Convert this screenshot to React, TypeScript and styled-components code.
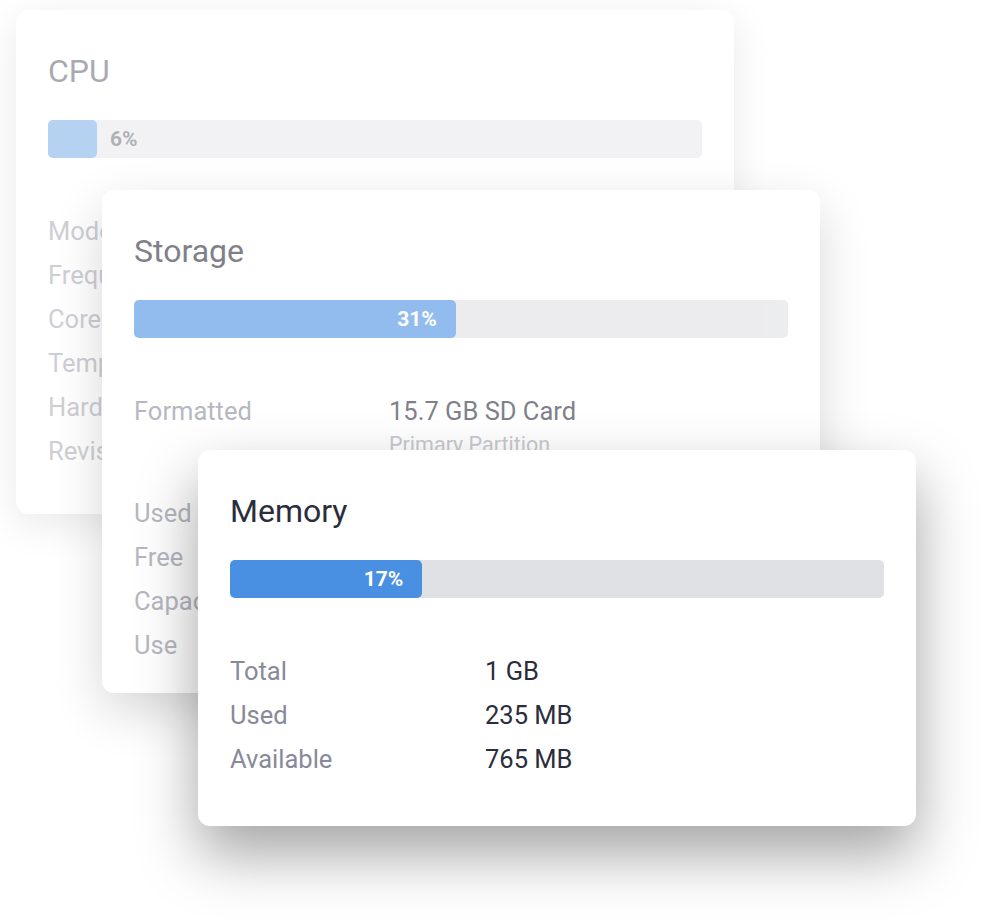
import * as React from "react";
import styled, { createGlobalStyle } from "styled-components";

const GlobalStyle = createGlobalStyle`
  html, body {
    margin: 0;
    padding: 0;
    background: #ffffff;
    font-family: Roboto, "Liberation Sans", sans-serif;
    -webkit-font-smoothing: antialiased;
  }
`;

interface IRow {
  label: string;
  value: string;
  sub?: string;
}

interface ICard {
  title: string;
  percent: number;
  fill: number; // bar fill width, in % of the track
  inside: boolean; // label sits inside the fill
  fade: number;
  left: number;
  top: number;
  height: number;
  shadow: string;
  rows: IRow[];
}

const cards: ICard[] = [
  {
    title: "CPU",
    percent: 6,
    fill: 7.5,
    inside: false,
    fade: 0.4,
    left: 16,
    top: 10,
    height: 504,
    shadow: "0 10px 40px rgba(0, 0, 0, 0.09)",
    rows: [
      { label: "Model", value: "ARMv7 Processor rev 4" },
      { label: "Frequency", value: "1.2 GHz" },
      { label: "Cores", value: "4" },
      { label: "Temperature", value: "48.3 °C" },
      { label: "Hardware", value: "BCM2835" },
      { label: "Revision", value: "a02082" }
    ]
  },
  {
    title: "Storage",
    percent: 31,
    fill: 49.2,
    inside: true,
    fade: 0.6,
    left: 102,
    top: 190,
    height: 503,
    shadow: "0 18px 50px rgba(0, 0, 0, 0.16)",
    rows: [
      { label: "Formatted", value: "15.7 GB SD Card", sub: "Primary Partition" },
      { label: "Used", value: "4.5 GB" },
      { label: "Free", value: "10.2 GB" },
      { label: "Capacity", value: "14.7 GB" },
      { label: "Use", value: "31%" }
    ]
  },
  {
    title: "Memory",
    percent: 17,
    fill: 29.4,
    inside: true,
    fade: 1,
    left: 198,
    top: 450,
    height: 376,
    shadow: "0 28px 60px rgba(0, 0, 0, 0.36)",
    rows: [
      { label: "Total", value: "1 GB" },
      { label: "Used", value: "235 MB" },
      { label: "Available", value: "765 MB" }
    ]
  }
];

const Stage = styled.div`
  position: relative;
  width: 984px;
  height: 922px;
  overflow: hidden;
`;

// cards overlap like windows on a desktop, so they are placed on the stage
const Card = styled.section<{ $left: number; $top: number; $height: number; $shadow: string }>`
  position: absolute;
  left: ${p => p.$left}px;
  top: ${p => p.$top}px;
  width: 718px;
  height: ${p => p.$height}px;
  box-sizing: border-box;
  background: #fff;
  border-radius: 12px;
  box-shadow: ${p => p.$shadow};
`;

const Content = styled.div<{ $fade: number }>`
  display: flex;
  flex-direction: column;
  padding: 43px 32px 0;
  opacity: ${p => p.$fade};
`;

const Title = styled.h2`
  margin: 0;
  font-size: 32px;
  line-height: 36px;
  font-weight: 400;
  color: #2b2d3c;
`;

const Track = styled.div`
  margin-top: 31px;
  height: 38px;
  border-radius: 5px;
  background: #e0e1e5;
  display: flex;
  align-items: center;
`;

const Fill = styled.div<{ $inside: boolean }>`
  height: 100%;
  border-radius: 5px;
  background: #4a90e2;
  display: flex;
  align-items: center;
  justify-content: flex-end;
  padding-right: ${p => (p.$inside ? 19 : 0)}px;
  box-sizing: border-box;
  flex: none;
`;

const BarLabel = styled.span<{ $inside: boolean }>`
  font-size: 21px;
  font-weight: 700;
  color: ${p => (p.$inside ? "#ffffff" : "#3a3c48")};
  margin-left: ${p => (p.$inside ? 0 : 13)}px;
`;

const Rows = styled.div`
  margin-top: 51px;
  display: flex;
  flex-direction: column;
`;

const Row = styled.div<{ $hasSub: boolean }>`
  display: grid;
  grid-template-columns: 255px 1fr;
  margin-bottom: ${p => (p.$hasSub ? 34 : 0)}px;
`;

const Label = styled.span`
  font-size: 25.5px;
  line-height: 44px;
  color: #878a98;
  white-space: nowrap;
`;

const Value = styled.div`
  display: flex;
  flex-direction: column;
  font-size: 25.5px;
  line-height: 44px;
  color: #2b2d3c;
  white-space: nowrap;
`;

const Sub = styled.span`
  font-size: 21.5px;
  line-height: 24px;
  color: #a3a6b1;
`;

function Meter({ card }: { card: ICard }) {
  const label = <BarLabel $inside={card.inside}>{card.percent}%</BarLabel>;
  return (
    <Track>
      <Fill $inside={card.inside} style={{ width: `${card.fill}%` }}>
        {card.inside && label}
      </Fill>
      {!card.inside && label}
    </Track>
  );
}

function StatCard({ card }: { card: ICard }) {
  return (
    <Card $left={card.left} $top={card.top} $height={card.height} $shadow={card.shadow}>
      <Content $fade={card.fade}>
        <Title>{card.title}</Title>
        <Meter card={card} />
        <Rows>
          {card.rows.map(r => (
            <Row key={r.label} $hasSub={!!r.sub}>
              <Label>{r.label}</Label>
              <Value>
                {r.value}
                {r.sub && <Sub>{r.sub}</Sub>}
              </Value>
            </Row>
          ))}
        </Rows>
      </Content>
    </Card>
  );
}

export default function App() {
  return (
    <>
      <GlobalStyle />
      <Stage>
        {cards.map(c => (
          <StatCard key={c.title} card={c} />
        ))}
      </Stage>
    </>
  );
}
